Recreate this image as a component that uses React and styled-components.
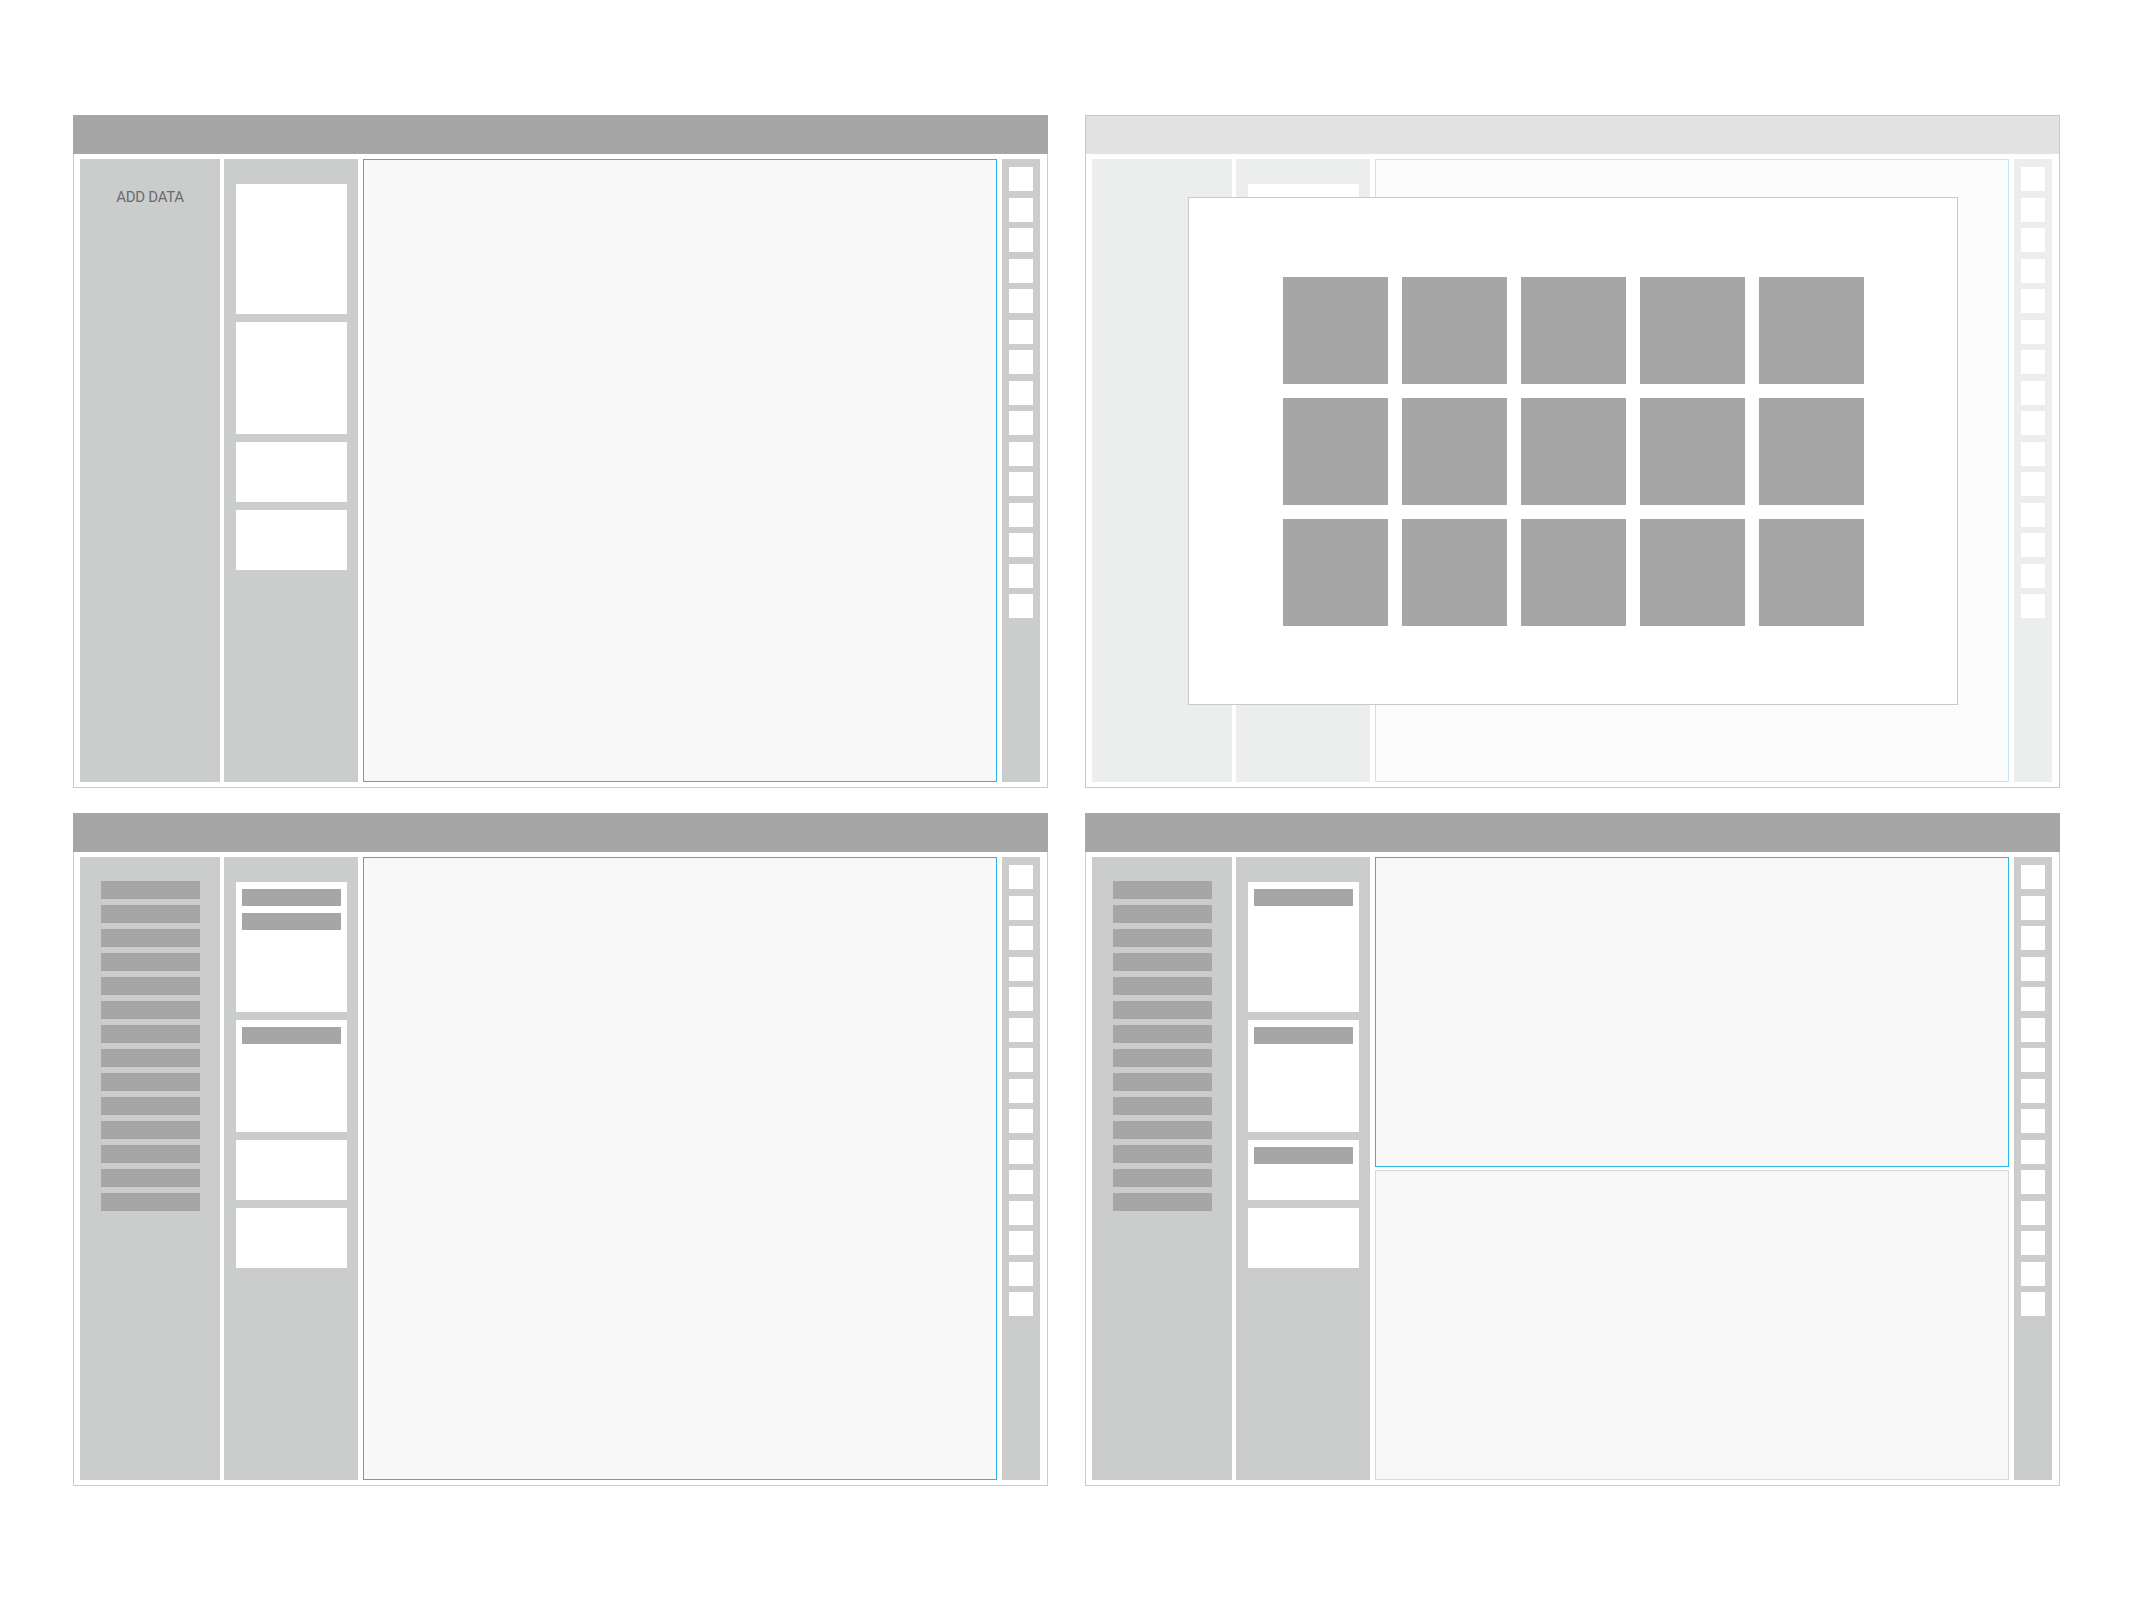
import styled, { createGlobalStyle, css } from "styled-components";

const GlobalStyle = createGlobalStyle`
  html, body {
    margin: 0;
    padding: 0;
    background: #ffffff;
    font-family: "Roboto", "Liberation Sans", sans-serif;
  }
`;

const normal = {
  header: "#a6a6a6",
  column: "#cbcdcc",
  canvas: "#f8f8f8",
  canvasBorder: "#2bb4e6",
  frame: "#cccccc",
};

const dimmed = {
  header: "#e2e2e2",
  column: "#eceeed",
  canvas: "#fcfcfc",
  canvasBorder: "#bfe6f2",
  frame: "#c8c8c8",
};

const Page = styled.div`
  display: grid;
  grid-template-columns: 975px 975px;
  column-gap: 37px;
  row-gap: 25px;
  padding: 115px 0 0 73px;
`;

const Frame = styled.div`
  position: relative;
  width: 975px;
  height: 673px;
  box-sizing: border-box;
  border: 1px solid ${(p) => p.$c.frame};
  display: flex;
  flex-direction: column;
`;

const Header = styled.div`
  height: 38px;
  flex: none;
  background: ${(p) => p.$c.header};
  ${(p) =>
    !p.$dim &&
    css`
      margin: -1px -1px 0;
      height: 39px;
    `}
`;

const Body = styled.div`
  flex: 1;
  display: flex;
  padding: 5px 7px 5px 6px;
  min-height: 0;
`;

const LeftCol = styled.div`
  width: 140px;
  flex: none;
  background: ${(p) => p.$c.column};
  display: flex;
  flex-direction: column;
  align-items: center;
  gap: 6px;
  padding-top: 24px;
  box-sizing: border-box;
  margin-right: 4px;
`;

const AddData = styled.div`
  margin-top: 5px;
  font-size: 15px;
  line-height: 18px;
  letter-spacing: -0.3px;
  color: #6b6b6b;
`;

const ListBar = styled.div`
  width: 99px;
  height: 18px;
  background: #a6a6a6;
`;

const MidCol = styled.div`
  width: 134px;
  flex: none;
  background: ${(p) => p.$c.column};
  display: flex;
  flex-direction: column;
  gap: 8px;
  padding: 25px 11px 0 12px;
  box-sizing: border-box;
  margin-right: 5px;
`;

const Card = styled.div`
  height: ${(p) => p.$h}px;
  background: #ffffff;
  display: flex;
  flex-direction: column;
  gap: 7px;
  padding: 7px 6px 0;
  box-sizing: border-box;
`;

const CardBar = styled.div`
  height: 17px;
  background: #a6a6a6;
`;

const CanvasStack = styled.div`
  flex: 1;
  display: flex;
  flex-direction: column;
  gap: 3px;
  margin-right: 5px;
`;

const Canvas = styled.div`
  flex: 1;
  background: ${(p) => p.$c.canvas};
  border: 1px solid ${(p) => (p.$plain ? "#d8d8d8" : p.$c.canvasBorder)};
`;

const Toolbar = styled.div`
  width: 38px;
  flex: none;
  background: ${(p) => p.$c.column};
  display: flex;
  flex-direction: column;
  align-items: center;
  gap: 6.5px;
  padding-top: 8px;
  box-sizing: border-box;
`;

const ToolButton = styled.div`
  width: 24px;
  height: 24px;
  background: #ffffff;
  flex: none;
`;

const Modal = styled.div`
  position: absolute;
  left: 102px;
  top: 81px;
  width: 770px;
  height: 508px;
  box-sizing: border-box;
  background: #ffffff;
  border: 1px solid #c9c9c9;
  display: flex;
  align-items: center;
  justify-content: center;
`;

const TileGrid = styled.div`
  display: grid;
  grid-template-columns: repeat(5, 105px);
  grid-auto-rows: 107px;
  gap: 14px;
`;

const Tile = styled.div`
  background: #a6a6a6;
`;

const cardSets = {
  data: [[130, 0], [112, 0], [60, 0], [60, 0]],
  modal: [[130, 0], [112, 0], [60, 0], [60, 0]],
  list: [[130, 2], [112, 1], [60, 0], [60, 0]],
  split: [[130, 1], [112, 1], [60, 1], [60, 0]],
};

function Panel({ variant, dim }) {
  const c = dim ? dimmed : normal;
  const showList = variant === "list" || variant === "split";
  return (
    <Frame $c={c}>
      <Header $c={c} $dim={dim} />
      <Body>
        <LeftCol $c={c}>
          {variant === "data" && <AddData>ADD DATA</AddData>}
          {showList && Array.from({ length: 14 }, (_, i) => <ListBar key={i} />)}
        </LeftCol>
        <MidCol $c={c}>
          {cardSets[variant].map(([h, bars], i) => (
            <Card key={i} $h={h}>
              {Array.from({ length: bars }, (_, j) => (
                <CardBar key={j} />
              ))}
            </Card>
          ))}
        </MidCol>
        <CanvasStack>
          <Canvas $c={c} />
          {variant === "split" && <Canvas $c={c} $plain />}
        </CanvasStack>
        <Toolbar $c={c}>
          {Array.from({ length: 15 }, (_, i) => (
            <ToolButton key={i} />
          ))}
        </Toolbar>
      </Body>
      {variant === "modal" && (
        <Modal>
          <TileGrid>
            {Array.from({ length: 15 }, (_, i) => (
              <Tile key={i} />
            ))}
          </TileGrid>
        </Modal>
      )}
    </Frame>
  );
}

export default function App() {
  return (
    <>
      <GlobalStyle />
      <Page>
        <Panel variant="data" />
        <Panel variant="modal" dim />
        <Panel variant="list" />
        <Panel variant="split" />
      </Page>
    </>
  );
}
